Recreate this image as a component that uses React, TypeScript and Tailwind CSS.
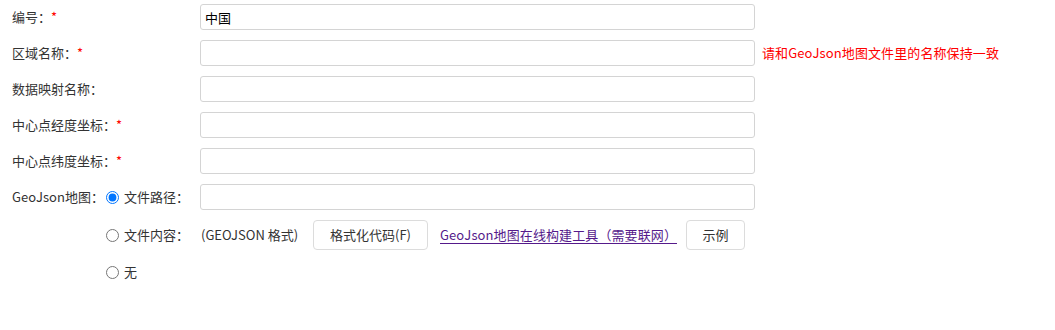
import React from "react";

const font = { fontFamily: '"Noto Sans CJK SC", "Noto Sans", sans-serif' };

interface RowProps {
	label: string;
	required?: boolean;
	value?: string;
	hint?: string;
}

const Star = () => <span className="text-[#ff0000]">*</span>;

const FieldRow = ({ label, required, value, hint }: RowProps) => {
	return (
		<div className="flex items-center h-[26px]">
			<div className="w-[188px] flex items-center text-[#333]">
				{label}
				{required && <Star />}
			</div>
			<input
				className="w-[555px] h-[26px] border border-[#d4d4d4] rounded-[3px] px-[4px] text-[13px] text-black outline-none"
				defaultValue={value}
				style={font}
			/>
			{hint && <span className="ml-[7px] text-[#ff0000] tracking-[0.1px]">{hint}</span>}
		</div>
	);
};

const Btn = ({ children, w }: { children: React.ReactNode; w: string }) => (
	<button
		className={`${w} h-[30px] border border-[#dcdcdc] rounded-[4px] bg-white text-[#333] text-[13px] flex items-center justify-center`}
		style={font}
	>
		{children}
	</button>
);

const Radio = ({ checked, label, w }: { checked?: boolean; label: string; w: string }) => (
	<label className={`${w} flex items-center gap-[5px] text-[#333]`}>
		<input type="radio" name="geo" defaultChecked={checked} className="m-0 w-[13px] h-[13px] ml-[1px]" />
		{label}
	</label>
);

export default function App() {
	return (
		<div className="w-[1055px] h-[330px] bg-white text-[13px] pl-[12px] pt-[4px] flex flex-col gap-[10px]" style={font}>
			<FieldRow label="编号：" required value="中国" />
			<FieldRow label="区域名称：" required hint="请和GeoJson地图文件里的名称保持一致" />
			<FieldRow label="数据映射名称：" />
			<FieldRow label="中心点经度坐标：" required />
			<FieldRow label="中心点纬度坐标：" required />
			<div className="flex">
				<div className="w-[93px] h-[26px] flex items-center text-[#333]">GeoJson地图：</div>
				<div className="flex flex-col gap-[10px]">
					<div className="flex items-center h-[26px]">
						<Radio checked label="文件路径：" w="w-[95px]" />
						<input
							className="w-[555px] h-[26px] border border-[#d4d4d4] rounded-[3px] px-[4px] text-[13px] outline-none"
							style={font}
						/>
					</div>
					<div className="flex items-center h-[30px]">
						<Radio label="文件内容：" w="w-[96px]" />
						<span className="text-[#333] w-[112px]">(GEOJSON 格式)</span>
						<Btn w="w-[115px]">格式化代码(F)</Btn>
						<a href="#" className="ml-[12px] text-[#551a8b] underline underline-offset-[3px] tracking-[0.1px]">
							GeoJson地图在线构建工具（需要联网）
						</a>
						<div className="ml-[9px]">
							<Btn w="w-[59px]">示例</Btn>
						</div>
					</div>
					<div className="flex items-center h-[24px]">
						<Radio label="无" w="w-[95px]" />
					</div>
				</div>
			</div>
		</div>
	);
}
